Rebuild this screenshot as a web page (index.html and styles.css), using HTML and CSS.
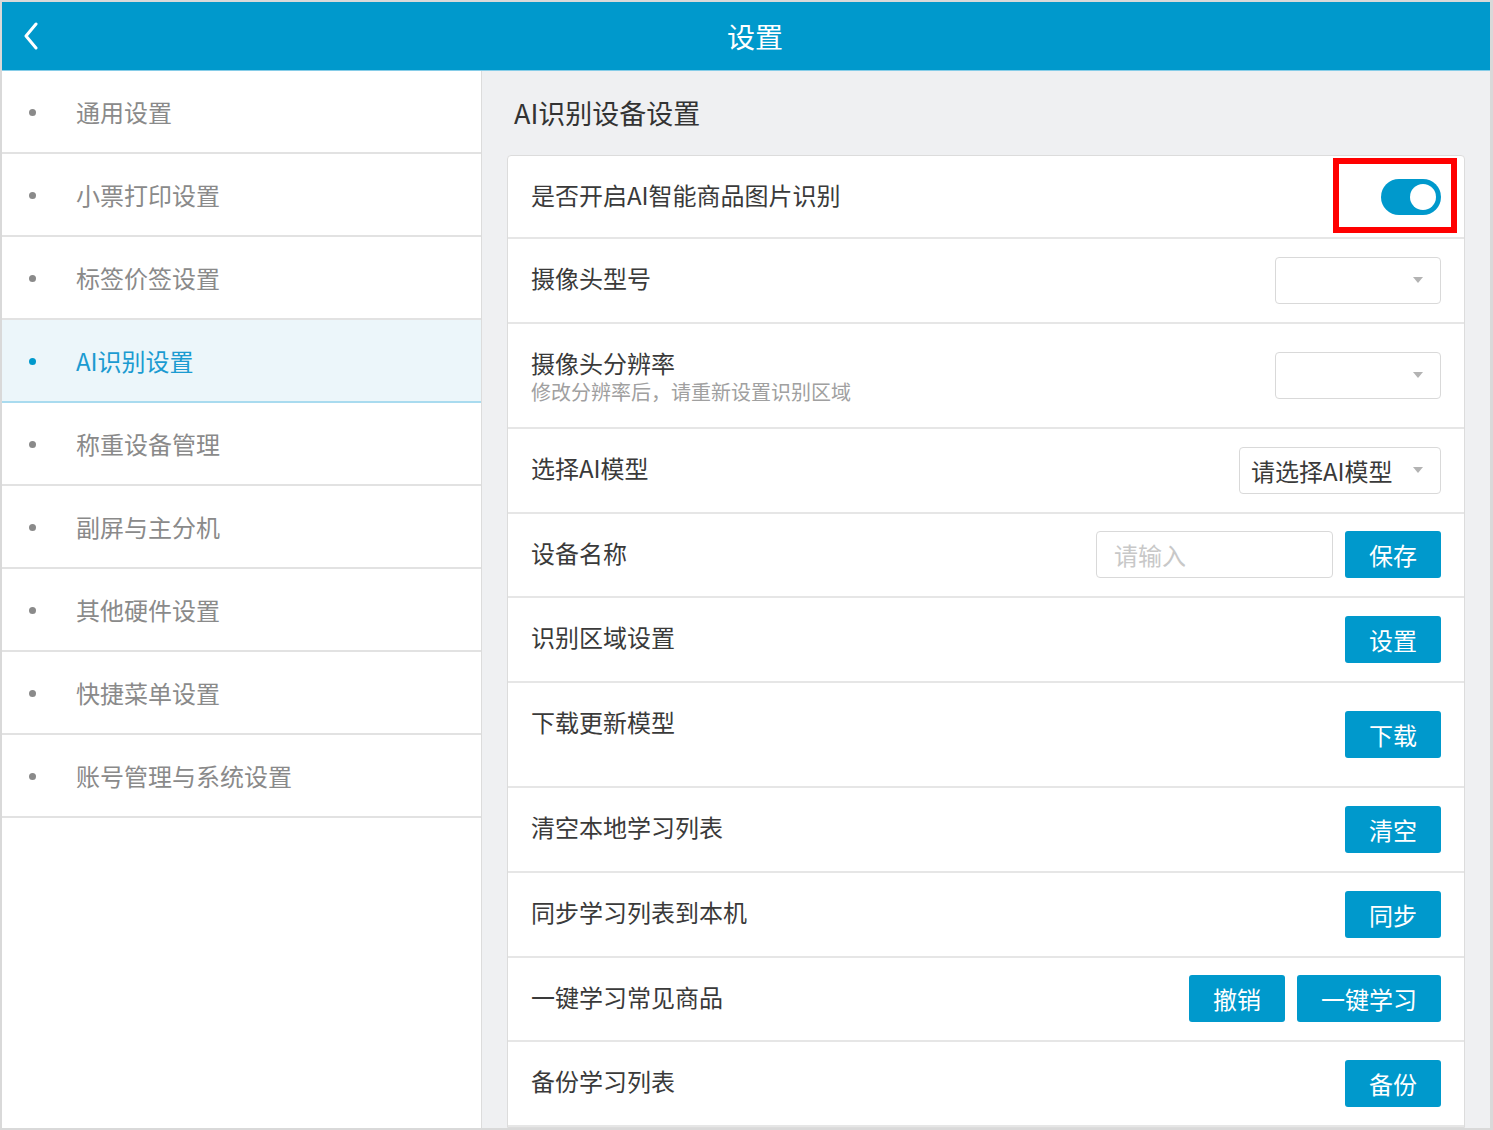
FILE: index.html
```html
<!DOCTYPE html>
<html lang="zh-CN">
<head>
  <meta charset="UTF-8" />
  <meta name="viewport" content="width=device-width, initial-scale=1.0" />
  <title>设置</title>
  <link rel="stylesheet" href="styles.css">
</head>
<body>
  <div class="app">
    <header class="topbar">
      <a class="back" href="#">
        <svg width="16" height="28" viewBox="0 0 16 28"><path d="M13 2 L3 14 L13 26" fill="none" stroke="#fff" stroke-width="3" stroke-linecap="round" stroke-linejoin="round"/></svg>
      </a>
      <h1>设置</h1>
      <span></span>
    </header>

    <div class="main">
      <ul class="sidebar">
        <li>通用设置</li>
        <li>小票打印设置</li>
        <li>标签价签设置</li>
        <li class="active">AI识别设置</li>
        <li>称重设备管理</li>
        <li>副屏与主分机</li>
        <li>其他硬件设置</li>
        <li>快捷菜单设置</li>
        <li>账号管理与系统设置</li>
      </ul>

      <section class="content">
        <h2>AI识别设备设置</h2>
        <div class="card">
          <div class="row">
            <div class="label">是否开启AI智能商品图片识别</div>
            <div class="switch-wrap">
              <span class="switch on"><span class="knob"></span></span>
              <span class="mark"></span>
            </div>
          </div>
          <div class="row">
            <div class="label">摄像头型号</div>
            <div class="select"><span></span><i class="caret"></i></div>
          </div>
          <div class="row">
            <div class="label">摄像头分辨率<small>修改分辨率后，请重新设置识别区域</small></div>
            <div class="select"><span></span><i class="caret"></i></div>
          </div>
          <div class="row">
            <div class="label">选择AI模型</div>
            <div class="select wide"><span>请选择AI模型</span><i class="caret"></i></div>
          </div>
          <div class="row">
            <div class="label">设备名称</div>
            <div class="controls">
              <input class="text" type="text" placeholder="请输入" />
              <button class="btn">保存</button>
            </div>
          </div>
          <div class="row">
            <div class="label">识别区域设置</div>
            <button class="btn">设置</button>
          </div>
          <div class="row">
            <div class="label">下载更新模型<small>&nbsp;</small></div>
            <button class="btn">下载</button>
          </div>
          <div class="row">
            <div class="label">清空本地学习列表</div>
            <button class="btn">清空</button>
          </div>
          <div class="row">
            <div class="label">同步学习列表到本机</div>
            <button class="btn">同步</button>
          </div>
          <div class="row">
            <div class="label">一键学习常见商品</div>
            <div class="controls">
              <button class="btn">撤销</button>
              <button class="btn">一键学习</button>
            </div>
          </div>
          <div class="row">
            <div class="label">备份学习列表</div>
            <button class="btn">备份</button>
          </div>
        </div>
      </section>
    </div>
  </div>
</body>
</html>
```

FILE: styles.css
```css
* {
  box-sizing: border-box;
}
body {
  margin: 0;
  font-family: "Noto Sans CJK SC", "Liberation Sans", sans-serif;
  background: #fff;
}
.app {
  height: 1130px;
  border: 2px solid #d9d9d9;
  border-right-width: 3px;
  display: flex;
  flex-direction: column;
  overflow: hidden;
}
.topbar {
  height: 69px;
  flex: none;
  background: #0099cc;
  border-bottom: 1px solid #86cde8;
  display: grid;
  grid-template-columns: 60px 1fr 42px;
  align-items: center;
}
.back {
  display: flex;
  padding-left: 21px;
}
.topbar h1 {
  margin: 0;
  text-align: center;
  color: #fff;
  font-size: 28px;
  font-weight: normal;
}
.main {
  flex: 1;
  display: flex;
  min-height: 0;
}
.sidebar {
  width: 480px;
  flex: none;
  margin: 0;
  padding: 0;
  list-style: none;
  background: #fff;
  border-right: 1px solid #dcdcdc;
}
.sidebar li {
  height: 83px;
  display: flex;
  align-items: center;
  padding-left: 74px;
  position: relative;
  font-size: 24px;
  color: #8a8a8a;
  border-bottom: 2px solid #e2e2e2;
}
.sidebar li::before {
  content: "";
  position: absolute;
  left: 27px;
  top: 38px;
  width: 7px;
  height: 7px;
  border-radius: 50%;
  background: #8a8a8a;
}
.sidebar li.active {
  background: #ecf6fa;
  color: #1b9bd1;
  border-bottom-color: #a9dbef;
}
.sidebar li.active::before {
  background: #0099cc;
}
.content {
  flex: 1;
  background: #eff0f2;
  padding: 0 25px 0 25px;
}
.content h2 {
  margin: 0 0 0 7px;
  height: 84px;
  line-height: 84px;
  font-size: 27px;
  font-weight: normal;
  color: #333;
}
.card {
  background: #fff;
  border: 1px solid #dcdcdc;
  border-radius: 4px 4px 0 0;
}
.row {
  display: flex;
  align-items: center;
  justify-content: space-between;
  padding: 0 23px;
  border-bottom: 2px solid #e6e6e6;
}
.row:first-child .label {
  padding-bottom: 26px;
}
.label {
  padding: 23px 0 27.7px;
  font-size: 24px;
  line-height: 32px;
  color: #3a3a3a;
}
.label small {
  display: block;
  margin: 3px 0 -3px;
  font-size: 20px;
  line-height: 20.5px;
  color: #a0a0a0;
}
.switch-wrap {
  position: relative;
}
.switch {
  display: block;
  width: 60px;
  height: 36px;
  border-radius: 18px;
  background: #0099cc;
  position: relative;
}
.switch .knob {
  position: absolute;
  right: 5px;
  top: 5px;
  width: 26px;
  height: 26px;
  border-radius: 50%;
  background: #fff;
}
.mark {
  position: absolute;
  left: -48px;
  top: -21px;
  width: 124px;
  height: 75px;
  border: 6px solid #ff0000;
}
.select {
  width: 166px;
  height: 47px;
  border: 1px solid #d9d9d9;
  border-radius: 4px;
  display: flex;
  align-items: center;
  justify-content: space-between;
  padding: 0 17px 0 11px;
  font-size: 24px;
  color: #3a3a3a;
}
.select.wide {
  width: 202px;
}
.caret {
  width: 0;
  height: 0;
  border-left: 5px solid transparent;
  border-right: 5px solid transparent;
  border-top: 6px solid #b3b3b3;
}
.controls {
  display: flex;
  gap: 12px;
}
.text {
  width: 237px;
  height: 47px;
  border: 1px solid #d9d9d9;
  border-radius: 4px;
  padding: 0 17px;
  font-family: inherit;
  font-size: 24px;
  color: #333;
}
.text::placeholder {
  color: #c8c8c8;
}
.btn {
  min-width: 95px;
  height: 47px;
  padding: 0 24px;
  border: none;
  border-radius: 3px;
  background: #0099cc;
  color: #fff;
  font-family: inherit;
  font-size: 24px;
}
```
